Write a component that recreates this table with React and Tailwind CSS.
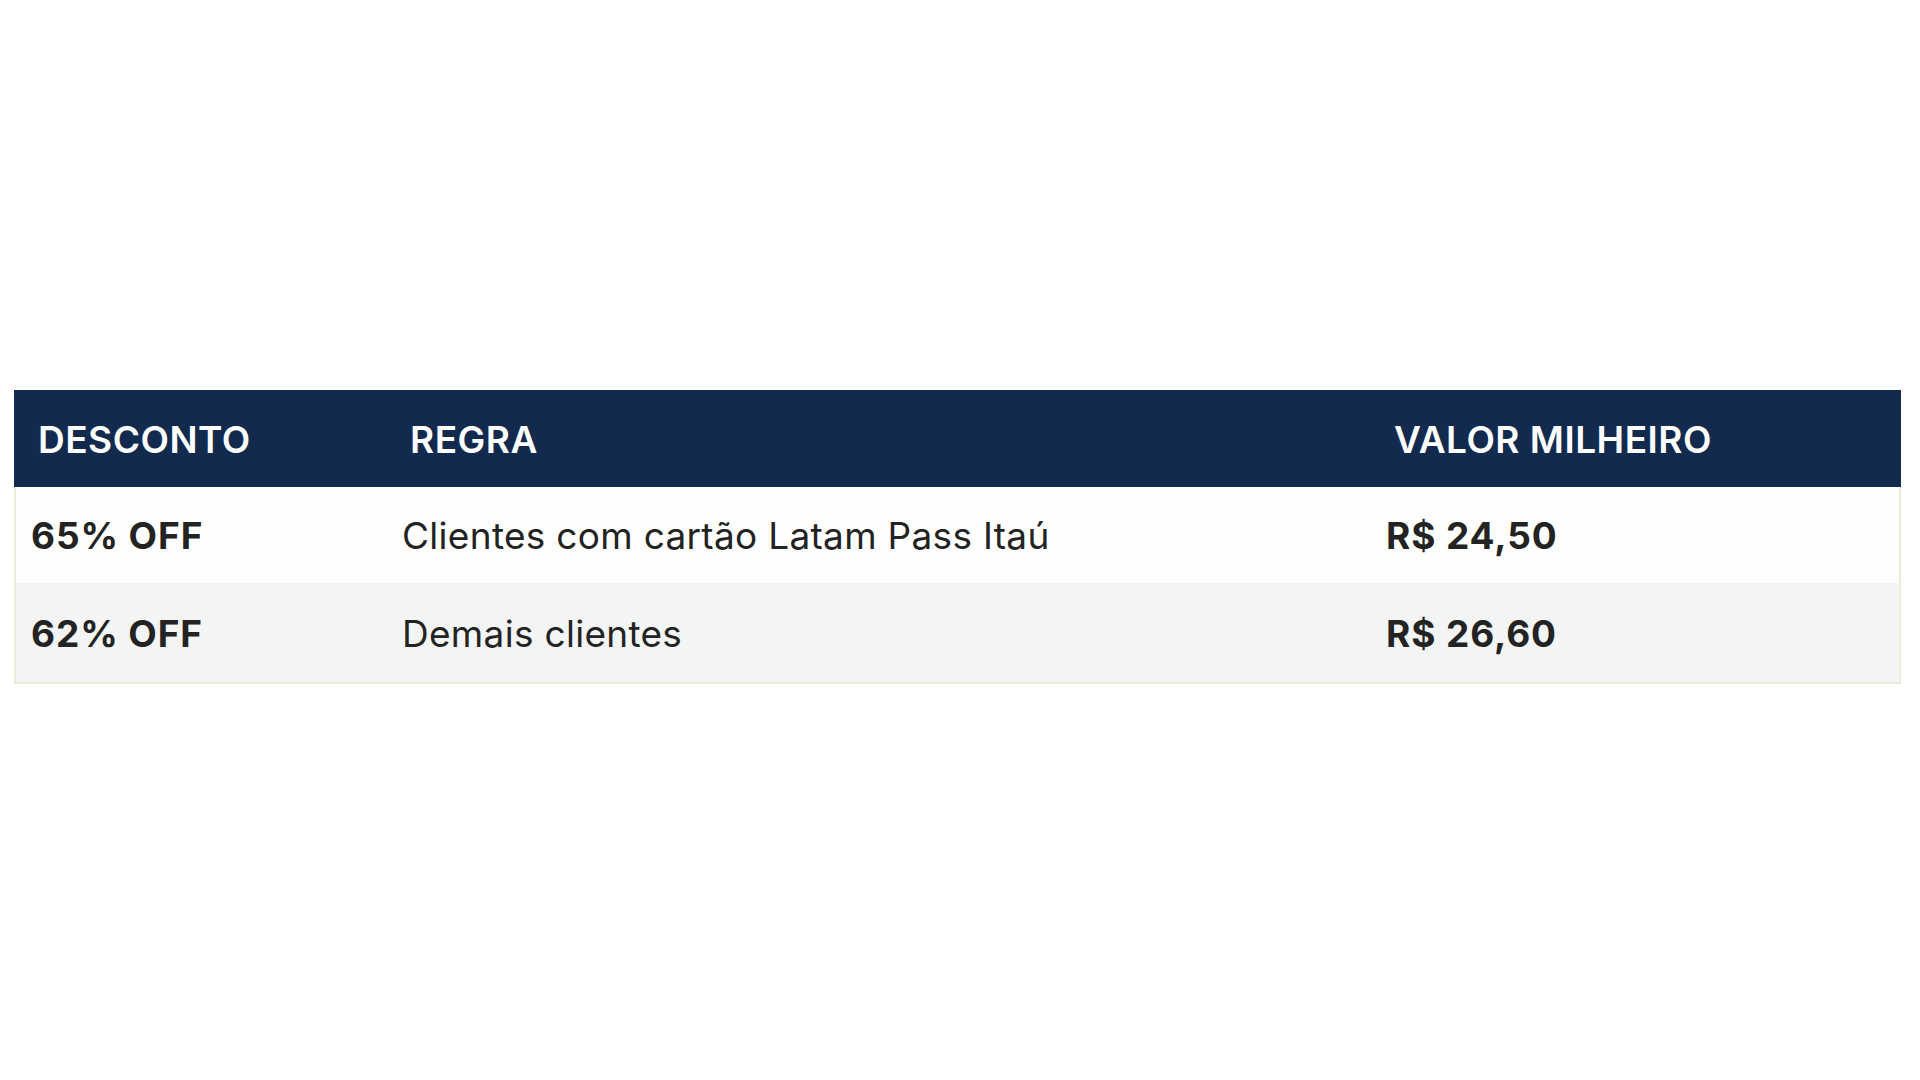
export default function App() {
  const rows = [
    { d: "65% OFF", r: "Clientes com cartão Latam Pass Itaú", v: "R$ 24,50", bg: "bg-[#fefffd]", h: "h-[96px]" },
    { d: "62% OFF", r: "Demais clientes", v: "R$ 26,60", bg: "bg-[#f3f5f4]", h: "h-[99px]" },
  ];
  return (
    <div className="min-h-[1080px] w-[1920px] bg-white pt-[390px] font-['Inter','Noto_Sans',sans-serif]">
      <div className="ml-[14px] w-[1887px]">
        <div className="grid h-[97px] grid-cols-[372px_984px_1fr] items-center bg-[#132a4f] pt-[2px] text-[37px] font-semibold tracking-[0.5px] text-white">
          <div className="pl-[24px]">DESCONTO</div>
          <div className="pl-[24px]">REGRA</div>
          <div className="pl-[24px]">VALOR MILHEIRO</div>
        </div>
        <div className="border-x-2 border-b-2 border-[#e9ecdb]">
          {rows.map((row) => (
            <div
              key={row.d}
              className={`grid grid-cols-[370px_984px_1fr] items-center ${row.bg} ${row.h} pt-[2px] text-[37px] text-[#232323]`}
            >
              <div className="pl-[15px] font-bold tracking-[0.9px]">{row.d}</div>
              <div className="pl-[16px] tracking-[0.3px]">{row.r}</div>
              <div className="pl-[16px] font-bold tracking-[0.9px]">{row.v}</div>
            </div>
          ))}
        </div>
      </div>
    </div>
  );
}
